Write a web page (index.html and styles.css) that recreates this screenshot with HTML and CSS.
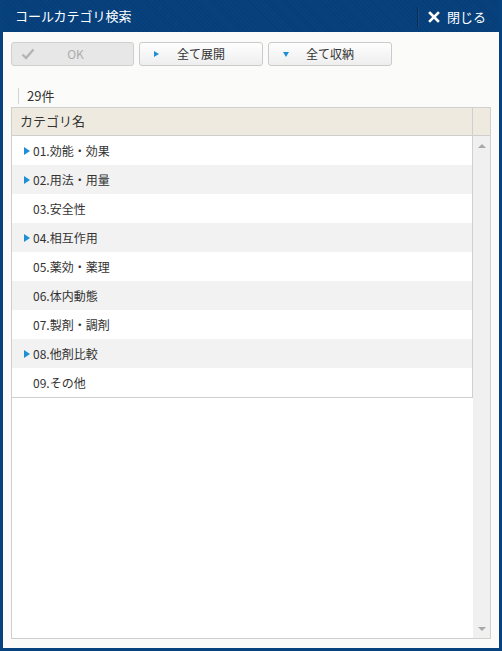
FILE: index.html
```html
<!DOCTYPE html>
<html lang="ja">
<head>
    <meta charset="UTF-8">
    <meta name="viewport" content="width=device-width, initial-scale=1.0">
    <title>コールカテゴリ検索</title>
    <link rel="stylesheet" href="styles.css">
</head>
<body>
    <div class="dialog">
        <header class="dialog-header">
            <h1 class="dialog-title">コールカテゴリ検索</h1>
            <button class="close-btn">
                <svg class="close-icon" width="12" height="12" viewBox="0 0 12 12">
                    <path d="M2 2 L10 10 M10 2 L2 10" stroke="#fff" stroke-width="2.6" stroke-linecap="square"/>
                </svg>
                <span>閉じる</span>
            </button>
        </header>

        <div class="dialog-body">
            <div class="toolbar">
                <button class="btn btn-ok" disabled>
                    <span class="btn-icon">
                        <svg width="14" height="12" viewBox="0 0 14 12">
                            <path d="M1.5 6.5 L5 10 L12.5 1.5" fill="none" stroke="#b4b4b4" stroke-width="2.4"/>
                        </svg>
                    </span>
                    <span class="btn-label">OK</span>
                </button>
                <button class="btn">
                    <span class="btn-icon"><span class="tri-right"></span></span>
                    <span class="btn-label">全て展開</span>
                </button>
                <button class="btn">
                    <span class="btn-icon"><span class="tri-down"></span></span>
                    <span class="btn-label">全て収納</span>
                </button>
            </div>

            <div class="count">29件</div>

            <div class="grid">
                <div class="grid-head">
                    <div class="grid-head-name">カテゴリ名</div>
                    <div class="grid-head-scroll"></div>
                </div>
                <div class="grid-main">
                    <div class="grid-rows">
                        <div class="row"><span class="row-toggle"></span>01.効能・効果</div>
                        <div class="row"><span class="row-toggle"></span>02.用法・用量</div>
                        <div class="row"><span class="row-space"></span>03.安全性</div>
                        <div class="row"><span class="row-toggle"></span>04.相互作用</div>
                        <div class="row"><span class="row-space"></span>05.薬効・薬理</div>
                        <div class="row"><span class="row-space"></span>06.体内動態</div>
                        <div class="row"><span class="row-space"></span>07.製剤・調剤</div>
                        <div class="row"><span class="row-toggle"></span>08.他剤比較</div>
                        <div class="row"><span class="row-space"></span>09.その他</div>
                    </div>
                    <div class="scrollbar">
                        <span class="scroll-up"></span>
                        <span class="scroll-down"></span>
                    </div>
                </div>
            </div>
        </div>
    </div>
</body>
</html>
```

FILE: styles.css
```css
:root {
    --frame-blue: #07427f;
    --line: #cfcfcf;
    --text: #333;
    --accent: #1e8fd6;
}

* {
    margin: 0;
    padding: 0;
    box-sizing: border-box;
    font-family: "Noto Sans CJK JP", "Noto Sans", sans-serif;
}

body {
    background: #fff;
}

.dialog {
    width: 502px;
    height: 651px;
    display: flex;
    flex-direction: column;
    background: var(--frame-blue);
    padding: 0 3px 3px;
}

/* タイトルバー */
.dialog-header {
    height: 32px;
    display: flex;
    align-items: center;
    justify-content: space-between;
    padding: 0 13px 0 12px;
    background-color: var(--frame-blue);
    background-image: repeating-linear-gradient(45deg, rgba(0,0,0,0.07) 0 1px, transparent 1px 3px);
}

.dialog-title {
    color: #fff;
    font-size: 13px;
    font-weight: 400;
    line-height: 16px;
}

.close-btn {
    display: flex;
    align-items: center;
    gap: 7px;
    height: 20px;
    padding: 0 0 0 10px;
    margin-top: 1px;
    background: none;
    border: none;
    border-left: 1px solid #0a2c52;
    box-shadow: 1px 0 0 rgba(255,255,255,0.06) inset;
    color: #fff;
    font-size: 13px;
    line-height: 16px;
    cursor: pointer;
}

.dialog-body {
    flex: 1;
    display: flex;
    flex-direction: column;
    background: #fbfbfa;
    padding: 10px 8px 9px;
}

/* ボタン */
.toolbar {
    display: flex;
    gap: 5px;
}

.btn {
    width: 124px;
    height: 24px;
    display: flex;
    align-items: center;
    padding: 0 14px;
    border: 1px solid #cbcbcb;
    border-radius: 3px;
    background: linear-gradient(#fefefe, #eeeeee);
    color: var(--text);
    font-size: 12px;
    line-height: 16px;
    cursor: pointer;
}

.btn::after {
    content: '';
    width: 20px;
}

.btn-icon {
    width: 20px;
    display: flex;
    align-items: center;
}

.btn-label {
    flex: 1;
    text-align: center;
}

.btn-ok {
    width: 123px;
    padding: 0 9px;
    background: #e7e7e7;
    border-color: #d0d0d0;
    color: #acacac;
    cursor: default;
}

.btn-ok::after {
    width: 14px;
}

.tri-right {
    width: 0;
    height: 0;
    border-top: 3.5px solid transparent;
    border-bottom: 3.5px solid transparent;
    border-left: 5px solid var(--accent);
}

.tri-down {
    width: 0;
    height: 0;
    margin-top: 1px;
    border-left: 3.5px solid transparent;
    border-right: 3.5px solid transparent;
    border-top: 5px solid var(--accent);
}

.count {
    margin: 22px 0 3px 7px;
    padding-left: 8px;
    border-left: 1px solid #d2d2d2;
    color: var(--text);
    font-size: 13px;
    line-height: 16px;
}

/* 一覧 */
.grid {
    flex: 1;
    display: flex;
    flex-direction: column;
    border: 1px solid var(--line);
    background: #fff;
}

.grid-head {
    height: 28px;
    display: flex;
    background: #eeeae0;
    border-bottom: 1px solid var(--line);
}

.grid-head-name {
    flex: 1;
    padding: 5px 8px;
    border-right: 1px solid var(--line);
    color: var(--text);
    font-size: 13px;
    line-height: 16px;
}

.grid-head-scroll {
    width: 17px;
}

.grid-main {
    flex: 1;
    display: flex;
    align-items: flex-start;
}

.grid-rows {
    flex: 1;
    border-right: 1px solid var(--line);
    border-bottom: 1px solid var(--line);
}

.row {
    height: 29px;
    display: flex;
    align-items: center;
    padding-left: 12px;
    color: var(--text);
    font-size: 12px;
    line-height: 16px;
}

.row:nth-child(even) {
    background: #f2f2f2;
}

.row-toggle,
.row-space {
    width: 9px;
    height: 8px;
}

.row-toggle {
    width: 0;
    margin-right: 3px;
    border-top: 4px solid transparent;
    border-bottom: 4px solid transparent;
    border-left: 6px solid var(--accent);
}

.scrollbar {
    width: 17px;
    align-self: stretch;
    display: flex;
    flex-direction: column;
    justify-content: space-between;
    align-items: center;
    padding: 8px 0 7px;
    background: #f0f0f0;
}

.scroll-up {
    border-left: 4px solid transparent;
    border-right: 4px solid transparent;
    border-bottom: 4px solid #a8a8a8;
}

.scroll-down {
    border-left: 4px solid transparent;
    border-right: 4px solid transparent;
    border-top: 4px solid #a8a8a8;
}
```
